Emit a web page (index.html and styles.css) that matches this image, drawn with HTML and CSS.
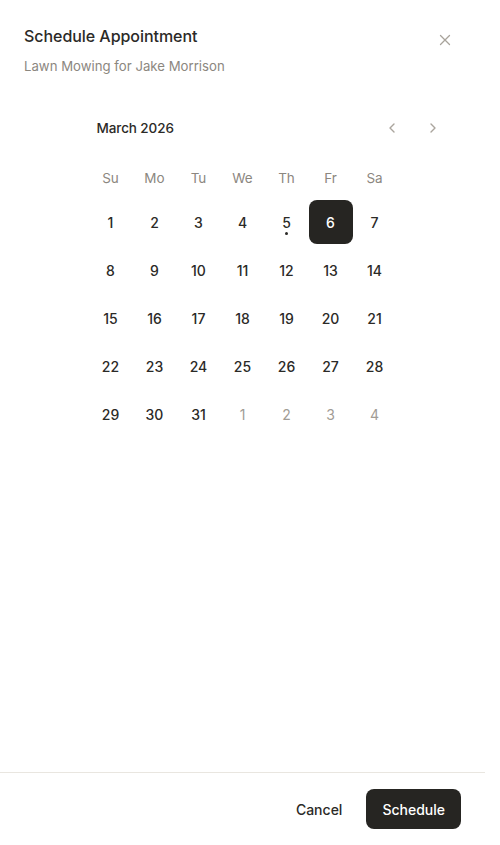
FILE: index.html
```html
<!DOCTYPE html>
<html lang="en">
<head>
<meta charset="utf-8">
<title>Schedule Appointment</title>
<link rel="stylesheet" href="styles.css">
</head>
<body>
<div class="dialog">
  <header class="head">
    <div class="head-text">
      <h1 class="title">Schedule Appointment</h1>
      <p class="subtitle">Lawn Mowing for Jake Morrison</p>
    </div>
    <button class="close" aria-label="Close">
      <svg width="16" height="16" viewBox="0 0 16 16" fill="none" stroke="currentColor" stroke-width="1.3" stroke-linecap="round"><path d="M3.5 3.5l9 9M12.5 3.5l-9 9"/></svg>
    </button>
  </header>

  <main class="body">
    <div class="calendar">
      <div class="cal-head">
        <span class="month">March 2026</span>
        <div class="nav">
          <button class="nav-btn" aria-label="Previous month">
            <svg width="16" height="16" viewBox="0 0 16 16" fill="none" stroke="currentColor" stroke-width="1.4" stroke-linecap="round" stroke-linejoin="round"><path d="M10 4l-4 4 4 4"/></svg>
          </button>
          <button class="nav-btn" aria-label="Next month">
            <svg width="16" height="16" viewBox="0 0 16 16" fill="none" stroke="currentColor" stroke-width="1.4" stroke-linecap="round" stroke-linejoin="round"><path d="M6 4l4 4-4 4"/></svg>
          </button>
        </div>
      </div>
      <div class="grid">
        <span class="dow">Su</span><span class="dow">Mo</span><span class="dow">Tu</span><span class="dow">We</span><span class="dow">Th</span><span class="dow">Fr</span><span class="dow">Sa</span>

        <span class="day">1</span><span class="day">2</span><span class="day">3</span><span class="day">4</span><span class="day today">5</span><span class="day selected">6</span><span class="day">7</span>
        <span class="day">8</span><span class="day">9</span><span class="day">10</span><span class="day">11</span><span class="day">12</span><span class="day">13</span><span class="day">14</span>
        <span class="day">15</span><span class="day">16</span><span class="day">17</span><span class="day">18</span><span class="day">19</span><span class="day">20</span><span class="day">21</span>
        <span class="day">22</span><span class="day">23</span><span class="day">24</span><span class="day">25</span><span class="day">26</span><span class="day">27</span><span class="day">28</span>
        <span class="day">29</span><span class="day">30</span><span class="day">31</span><span class="day muted">1</span><span class="day muted">2</span><span class="day muted">3</span><span class="day muted">4</span>
      </div>
    </div>
  </main>

  <footer class="foot">
    <button class="btn ghost">Cancel</button>
    <button class="btn primary">Schedule</button>
  </footer>
</div>
</body>
</html>
```

FILE: styles.css
```css
* { box-sizing: border-box; }

html, body {
  margin: 0;
  padding: 0;
  background: #ffffff;
}

body {
  font-family: Inter, "Noto Sans", "Liberation Sans", sans-serif;
  color: #262522;
}

button {
  font-family: inherit;
  border: 0;
  background: none;
  cursor: pointer;
  padding: 0;
}

.dialog {
  width: 485px;
  min-height: 845px;
  display: flex;
  flex-direction: column;
}

.head {
  display: flex;
  justify-content: space-between;
  align-items: flex-start;
  padding: 24px 24px 0 24px;
}

.title {
  margin: 0;
  font-size: 16px;
  line-height: 24px;
  font-weight: 500;
  color: #2b2a27;
  letter-spacing: -0.05px;
}

.subtitle {
  margin: 8px 0 0 0;
  font-size: 13.2px;
  line-height: 20px;
  color: #8c877f;
}

.close {
  width: 32px;
  height: 32px;
  display: flex;
  align-items: center;
  justify-content: center;
  color: #a8a39b;
}

.body {
  flex: 1;
  padding-top: 36px;
}

.calendar {
  width: 308px;
  margin: 0 auto;
}

.cal-head {
  display: flex;
  align-items: center;
  justify-content: space-between;
  height: 32px;
  padding-left: 8px;
  margin-right: -52px;
}

.month {
  font-size: 13.5px;
  font-weight: 500;
  color: #2b2a27;
  letter-spacing: -0.1px;
}

.nav {
  display: flex;
  gap: 9px;
}

.nav-btn {
  width: 32px;
  height: 32px;
  display: flex;
  align-items: center;
  justify-content: center;
  color: #aaa59d;
}

.grid {
  margin-top: 24px;
  display: grid;
  grid-template-columns: repeat(7, 44px);
  row-gap: 4px;
}

.dow {
  height: 20px;
  line-height: 20px;
  text-align: center;
  font-size: 13.5px;
  color: #8c877f;
  margin-bottom: 8px;
}

.day {
  position: relative;
  height: 44px;
  display: flex;
  align-items: center;
  justify-content: center;
  font-size: 14px;
  font-weight: 500;
  color: #2b2a27;
  border-radius: 8px;
}

.day.muted {
  color: #a19c95;
  font-weight: 400;
}

.day.selected {
  background: #262522;
  color: #ffffff;
}

.day.today::after {
  content: "";
  position: absolute;
  left: 50%;
  bottom: 9px;
  width: 3px;
  height: 3px;
  margin-left: -1.5px;
  border-radius: 50%;
  background: #2b2a27;
}

.foot {
  display: flex;
  justify-content: flex-end;
  align-items: center;
  gap: 8px;
  padding: 16px 24px;
  border-top: 1px solid #e9e6e0;
}

.btn {
  height: 40px;
  padding: 0 16px;
  border-radius: 8px;
  font-size: 14px;
  font-weight: 500;
}

.btn.ghost {
  color: #2b2a27;
}

.btn.primary {
  background: #262522;
  color: #ffffff;
}
```
